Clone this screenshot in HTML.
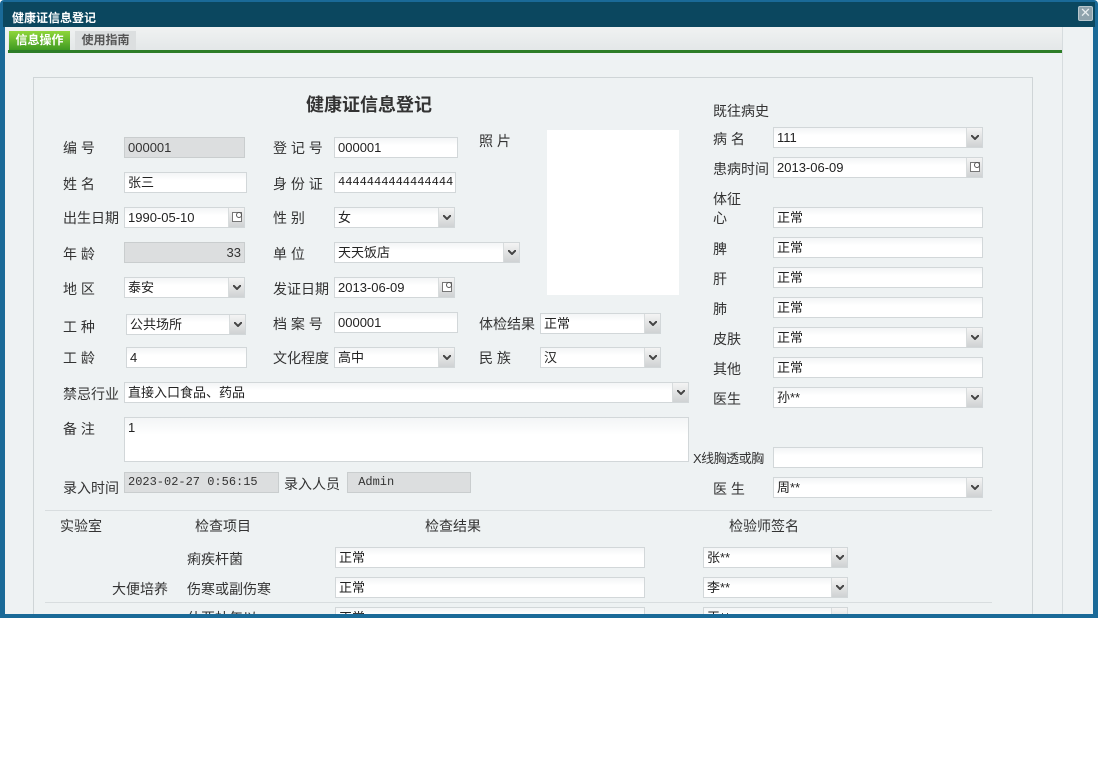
<!DOCTYPE html>
<html><head><meta charset="utf-8"><style>
*{margin:0;padding:0;box-sizing:border-box}
body{width:1098px;height:757px;background:#fff;position:relative;overflow:hidden;font-family:"Liberation Sans","Noto Sans CJK SC","WenQuanYi Zen Hei",sans-serif;}
.win{position:absolute;left:0;top:0;width:1098px;height:618px;background:#1a6a98;border-radius:4px 4px 0 0}
.tb{position:absolute;left:3px;top:2px;width:1092px;height:25px;background:#0b475f}
.tt{position:absolute;left:9px;top:7px;color:#fff;font-size:12px;font-weight:bold}
.cl{position:absolute;left:1078px;top:6px;width:15px;height:15px;background:#8fa3ad;border:1px solid #b9c7cd;border-radius:2px;color:#e8eef0;font-size:13px;line-height:12px;text-align:center}
.body{position:absolute;left:5px;top:27px;width:1088px;height:587px;background:#eef2f3;overflow:hidden}
.strip{position:absolute;left:1057px;top:0;width:1px;height:587px;background:#d6dcde}
.tabbar{position:absolute;left:3px;top:0;width:1054px;height:26px;background:linear-gradient(#f0f2f2,#e2e6e7)}
.gl{position:absolute;left:3px;top:23px;width:1054px;height:3px;background:#2d7d27}
.t1{position:absolute;left:4px;top:4px;width:61px;height:19px;background:linear-gradient(#8fd63a,#3f9a22);color:#fff;font-size:12px;font-weight:bold;text-align:center;line-height:19px}
.t2{position:absolute;left:70px;top:4px;width:61px;height:19px;background:#dcdfe0;color:#555;font-size:12px;font-weight:bold;text-align:center;line-height:19px}
.fs{position:absolute;left:28px;top:50px;width:1000px;height:560px;border:1px solid #cfd5d7}
.l{position:absolute;font-size:14px;color:#333;line-height:18px;white-space:nowrap}
.i{position:absolute;height:21px;border:1px solid #d2d7d9;background:linear-gradient(#f3f5f6,#fff 40%);font-size:13px;color:#222;line-height:19px;padding-left:3px;white-space:nowrap;overflow:hidden}
.g{background:#dcdedf;border-color:#c9cdce;color:#333}
.m{font-family:"Liberation Mono",monospace;font-size:12px}
.b{position:absolute;right:0;top:0;width:16px;height:19px;background:linear-gradient(#f4f4f4,#cfd2d3);border-left:1px solid #d8dcdd}
.b svg{position:absolute;left:4px;top:7px}
.c{position:absolute;right:0;top:0;width:16px;height:19px;background:linear-gradient(#f4f4f4,#cfd2d3);border-left:1px solid #d8dcdd}
.c i{position:absolute;left:3px;top:4px;width:10px;height:10px;border:1px solid #777;background:#fff}
.c i:after{content:"";position:absolute;right:-1px;top:-1px;width:4px;height:4px;border:1px solid #555;border-radius:50%;background:#fff}
.hr{position:absolute;height:1px;background:#d8dddf}
</style></head><body>
<div class="win">
<div class="tb"><div class="tt">健康证信息登记</div></div>
<div class="cl">✕</div>
<div class="body">
<div class="tabbar"></div><div class="gl"></div>
<div class="t1">信息操作</div><div class="t2">使用指南</div>
<div class="strip"></div>
<div class="fs"></div>
</div>
</div>

<div style="position:absolute;left:0;top:0;width:1098px;height:614px;overflow:hidden">
<div class="l" style="left:306px;top:94px;font-size:18px;line-height:22px;font-weight:bold">健康证信息登记</div>

<div class="l" style="left:63px;top:139px">编 号</div>
<div class="i g" style="left:124px;top:137px;width:121px">000001</div>
<div class="l" style="left:273px;top:139px">登 记 号</div>
<div class="i" style="left:334px;top:137px;width:124px">000001</div>
<div class="l" style="left:479px;top:132px">照 片</div>
<div style="position:absolute;left:547px;top:130px;width:132px;height:165px;background:#fff"></div>

<div class="l" style="left:63px;top:175px">姓 名</div>
<div class="i" style="left:124px;top:172px;width:123px">张三</div>
<div class="l" style="left:273px;top:175px">身 份 证</div>
<div class="i m" style="left:334px;top:172px;width:122px">4444444444444444</div>

<div class="l" style="left:63px;top:209px">出生日期</div>
<div class="i" style="left:124px;top:207px;width:121px">1990-05-10<span class="c"><i></i></span></div>
<div class="l" style="left:273px;top:209px">性 别</div>
<div class="i" style="left:334px;top:207px;width:121px">女<span class="b"><svg width="8" height="5"><polyline points="0,0 4,4 8,0" fill="none" stroke="#444" stroke-width="2"/></svg></span></div>

<div class="l" style="left:63px;top:245px">年 龄</div>
<div class="i g" style="left:124px;top:242px;width:121px;text-align:right;padding-right:3px">33</div>
<div class="l" style="left:273px;top:245px">单 位</div>
<div class="i" style="left:334px;top:242px;width:186px">天天饭店<span class="b"><svg width="8" height="5"><polyline points="0,0 4,4 8,0" fill="none" stroke="#444" stroke-width="2"/></svg></span></div>

<div class="l" style="left:63px;top:280px">地 区</div>
<div class="i" style="left:124px;top:277px;width:121px">泰安<span class="b"><svg width="8" height="5"><polyline points="0,0 4,4 8,0" fill="none" stroke="#444" stroke-width="2"/></svg></span></div>
<div class="l" style="left:273px;top:280px">发证日期</div>
<div class="i" style="left:334px;top:277px;width:121px">2013-06-09<span class="c"><i></i></span></div>

<div class="l" style="left:63px;top:318px">工 种</div>
<div class="i" style="left:126px;top:314px;width:120px">公共场所<span class="b"><svg width="8" height="5"><polyline points="0,0 4,4 8,0" fill="none" stroke="#444" stroke-width="2"/></svg></span></div>
<div class="l" style="left:273px;top:315px">档 案 号</div>
<div class="i" style="left:334px;top:312px;width:124px">000001</div>
<div class="l" style="left:479px;top:315px">体检结果</div>
<div class="i" style="left:540px;top:313px;width:121px">正常<span class="b"><svg width="8" height="5"><polyline points="0,0 4,4 8,0" fill="none" stroke="#444" stroke-width="2"/></svg></span></div>

<div class="l" style="left:63px;top:349px">工 龄</div>
<div class="i" style="left:126px;top:347px;width:121px">4</div>
<div class="l" style="left:273px;top:349px">文化程度</div>
<div class="i" style="left:334px;top:347px;width:121px">高中<span class="b"><svg width="8" height="5"><polyline points="0,0 4,4 8,0" fill="none" stroke="#444" stroke-width="2"/></svg></span></div>
<div class="l" style="left:479px;top:349px">民 族</div>
<div class="i" style="left:540px;top:347px;width:121px">汉<span class="b"><svg width="8" height="5"><polyline points="0,0 4,4 8,0" fill="none" stroke="#444" stroke-width="2"/></svg></span></div>

<div class="l" style="left:63px;top:385px">禁忌行业</div>
<div class="i" style="left:124px;top:382px;width:565px">直接入口食品、药品<span class="b"><svg width="8" height="5"><polyline points="0,0 4,4 8,0" fill="none" stroke="#444" stroke-width="2"/></svg></span></div>

<div class="l" style="left:63px;top:420px">备 注</div>
<div class="i" style="left:124px;top:417px;width:565px;height:45px;line-height:20px">1</div>

<div class="l" style="left:63px;top:479px">录入时间</div>
<div class="i g m" style="left:124px;top:472px;width:155px">2023-02-27 0:56:15</div>
<div class="l" style="left:284px;top:475px">录入人员</div>
<div class="i g m" style="left:347px;top:472px;width:124px">&nbsp;Admin</div>

<div class="l" style="left:713px;top:102px">既往病史</div>
<div class="l" style="left:713px;top:130px">病 名</div>
<div class="i" style="left:773px;top:127px;width:210px">111<span class="b"><svg width="8" height="5"><polyline points="0,0 4,4 8,0" fill="none" stroke="#444" stroke-width="2"/></svg></span></div>
<div class="l" style="left:713px;top:160px">患病时间</div>
<div class="i" style="left:773px;top:157px;width:210px">2013-06-09<span class="c"><i></i></span></div>
<div class="l" style="left:713px;top:190px">体征</div>
<div class="l" style="left:713px;top:209px">心</div>
<div class="i" style="left:773px;top:207px;width:210px">正常</div>
<div class="l" style="left:713px;top:240px">脾</div>
<div class="i" style="left:773px;top:237px;width:210px">正常</div>
<div class="l" style="left:713px;top:270px">肝</div>
<div class="i" style="left:773px;top:267px;width:210px">正常</div>
<div class="l" style="left:713px;top:300px">肺</div>
<div class="i" style="left:773px;top:297px;width:210px">正常</div>
<div class="l" style="left:713px;top:330px">皮肤</div>
<div class="i" style="left:773px;top:327px;width:210px">正常<span class="b"><svg width="8" height="5"><polyline points="0,0 4,4 8,0" fill="none" stroke="#444" stroke-width="2"/></svg></span></div>
<div class="l" style="left:713px;top:360px">其他</div>
<div class="i" style="left:773px;top:357px;width:210px">正常</div>
<div class="l" style="left:713px;top:390px">医生</div>
<div class="i" style="left:773px;top:387px;width:210px">孙**<span class="b"><svg width="8" height="5"><polyline points="0,0 4,4 8,0" fill="none" stroke="#444" stroke-width="2"/></svg></span></div>
<div class="l" style="left:693px;top:450px;font-size:13px;letter-spacing:-0.5px">X线胸透或胸</div>
<div class="i" style="left:773px;top:447px;width:210px"></div>
<div class="l" style="left:713px;top:480px">医 生</div>
<div class="i" style="left:773px;top:477px;width:210px">周**<span class="b"><svg width="8" height="5"><polyline points="0,0 4,4 8,0" fill="none" stroke="#444" stroke-width="2"/></svg></span></div>

<div class="hr" style="left:45px;top:510px;width:947px"></div>
<div class="l" style="left:60px;top:517px">实验室</div>
<div class="l" style="left:195px;top:517px">检查项目</div>
<div class="l" style="left:425px;top:517px">检查结果</div>
<div class="l" style="left:729px;top:517px">检验师签名</div>

<div class="l" style="left:187px;top:550px">痢疾杆菌</div>
<div class="i" style="left:335px;top:547px;width:310px">正常</div>
<div class="i" style="left:703px;top:547px;width:145px">张**<span class="b"><svg width="8" height="5"><polyline points="0,0 4,4 8,0" fill="none" stroke="#444" stroke-width="2"/></svg></span></div>
<div class="l" style="left:112px;top:580px">大便培养</div>
<div class="l" style="left:187px;top:580px">伤寒或副伤寒</div>
<div class="i" style="left:335px;top:577px;width:310px">正常</div>
<div class="i" style="left:703px;top:577px;width:145px">李**<span class="b"><svg width="8" height="5"><polyline points="0,0 4,4 8,0" fill="none" stroke="#444" stroke-width="2"/></svg></span></div>
<div class="hr" style="left:45px;top:602px;width:947px"></div>
<div class="l" style="left:187px;top:609px">什亚杜年以</div>
<div class="i" style="left:335px;top:607px;width:310px">正常</div>
<div class="i" style="left:703px;top:607px;width:145px">王**<span class="b"></span></div>
</div>
<div style="position:absolute;left:0;top:614px;width:1098px;height:4px;background:#1a6a98"></div>
</body></html>
